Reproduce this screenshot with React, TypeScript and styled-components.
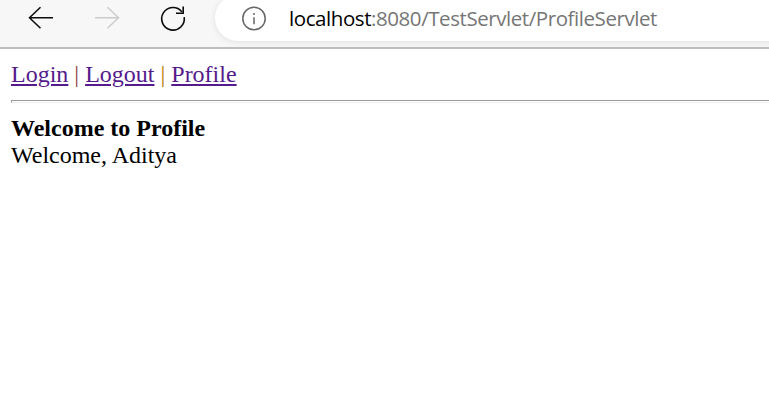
import React from "react";
import styled, { createGlobalStyle } from "styled-components";

const GlobalStyle = createGlobalStyle`
  * { box-sizing: border-box; }
  body { margin: 0; background: #fff; overflow: hidden; }
`;

const Window = styled.div`
  height: 406px;
  overflow: hidden;
  background: #fff;
`;

const Toolbar = styled.header`
  display: flex;
  height: 49px;
  overflow: hidden;
  background: #f7f7f7;
  border-bottom: 2px solid #bdbdbd;
`;

const Navigation = styled.nav`
  display: flex;
  flex: 0 0 215px;
  height: 36px;
  padding-left: 24px;
  gap: 32px;
`;

const IconButton = styled.button<{ $disabled?: boolean }>`
  width: 34px;
  height: 36px;
  padding: 0;
  border: 0;
  background: none;
  color: ${(p) => (p.$disabled ? "#cccccc" : "#0c0c0c")};
  svg { display: block; }
`;

const AddressBar = styled.div`
  display: flex;
  flex: none;
  align-items: center;
  width: 600px;
  height: 46px;
  margin-top: -5px;
  padding-left: 26px;
  border-radius: 23px;
  background: #fff;
  box-shadow: 0 1px 7px rgba(0, 0, 0, 0.09);
`;

const InfoIcon = styled.svg`
  flex: none;
`;

const Url = styled.div`
  margin: -1px 0 0 22px;
  color: #767676;
  font: 20.5px/30px "Open Sans", "Noto Sans", sans-serif;
  letter-spacing: -0.43px;
  white-space: nowrap;
`;

const Host = styled.span`
  color: #000;
`;

const Page = styled.main`
  padding: 12px 0 0 11px;
  color: #000;
  font: 24px/27px "Liberation Serif", "Times New Roman", serif;
`;

const Links = styled.div`
  height: 27px;
  white-space: pre;
`;

const Link = styled.a`
  color: #551a8b;
  text-decoration: underline;
  text-decoration-thickness: 2px;
  text-underline-offset: 2px;
`;

const Separator = styled.span<{ $color: string }>`
  color: ${(p) => p.$color};
`;

const Rule = styled.hr`
  height: 3px;
  margin: 12px 0;
  border: solid #9a9a9a;
  border-width: 1px 0 1px 1px;
  border-bottom-color: #eeeeee;
`;

const Line = styled.div<{ $bold?: boolean }>`
  height: 27px;
  font-weight: ${(p) => (p.$bold ? 700 : 400)};
`;

export default function App() {
  return (
    <Window>
      <GlobalStyle />
      <Toolbar>
        <Navigation>
          <IconButton aria-label="Back">
            <svg width="34" height="36" fill="none" stroke="currentColor" strokeWidth="1.5">
              <path d="M29 17.75H5.5M16.5 7.2 5.5 17.75 16.5 28.2" />
            </svg>
          </IconButton>
          <IconButton aria-label="Forward" $disabled>
            <svg width="34" height="36" fill="none" stroke="currentColor" strokeWidth="1.5">
              <path d="M5 17.75h23.5M17.5 7.2l11 10.55-11 10.45" />
            </svg>
          </IconButton>
          <IconButton aria-label="Refresh">
            <svg width="34" height="36" fill="none" stroke="currentColor" strokeWidth="1.6">
              <path d="M28.2 17.2A11.3 11.3 0 1 1 25.8 11.7M20 13.2h7.2V6.4" />
            </svg>
          </IconButton>
        </Navigation>
        <AddressBar>
          <InfoIcon width="26" height="26" fill="none" stroke="#666" strokeWidth="1.5">
            <circle cx="13" cy="13.5" r="11.2" />
            <path d="M13 12.2v7M13 8v2" />
          </InfoIcon>
          <Url><Host>localhost</Host>:8080/TestServlet/ProfileServlet</Url>
        </AddressBar>
      </Toolbar>
      <Page>
        <Links>
          <Link href="#login">Login</Link>
          <Separator $color="#8f3f3f"> | </Separator>
          <Link href="#logout">Logout</Link>
          <Separator $color="#bd7900"> | </Separator>
          <Link href="#profile">Profile</Link>
        </Links>
        <Rule />
        <Line $bold>Welcome to Profile</Line>
        <Line>Welcome, Aditya</Line>
      </Page>
    </Window>
  );
}
